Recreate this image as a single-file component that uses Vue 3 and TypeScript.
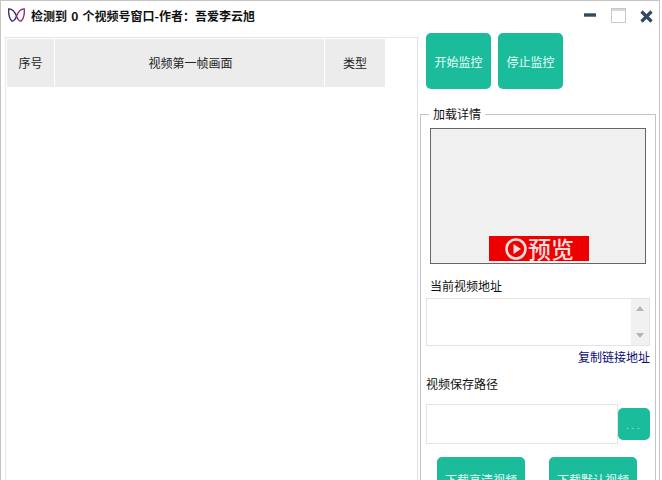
<script setup lang="ts">
const columns: { label: string; width: number }[] = [
  { label: '序号', width: 47 },
  { label: '视频第一帧画面', width: 269 },
  { label: '类型', width: 60 },
]
</script>

<template>
  <div class="window">
    <header class="titlebar">
      <svg class="logo" width="17" height="14" viewBox="0 0 17 14" fill="none">
        <path d="M8.5 8C7 4 4 1 .8 .8 .3 5 1.2 11 3.6 12.8 5.6 13.8 7.6 11 8.5 8Z" stroke="#3a1f78" stroke-width="1.3" />
        <path d="M8.5 8C10 4 13 1 16.2 .8 16.7 5 15.8 11 13.4 12.8 11.4 13.8 9.4 11 8.5 8Z" stroke="#8a2468" stroke-width="1.3" />
      </svg>
      <span class="title">检测到 0 个视频号窗口-作者：吾爱李云旭</span>
      <div class="controls">
        <svg width="12" height="4" viewBox="0 0 12 4"><rect width="12" height="3.4" y="0.3" fill="#34495e" /></svg>
        <svg width="15" height="15" viewBox="0 0 15 15" fill="none">
          <rect x="0.5" y="0.5" width="14" height="14" fill="#fff" stroke="#c8c8c8" />
          <rect x="1" y="1" width="13" height="2" fill="#d8d8d8" />
        </svg>
        <svg class="close" width="13" height="13" viewBox="0 0 13 13"><path d="M1.5 1.5L11.5 11.5M11.5 1.5L1.5 11.5" stroke="#34495e" stroke-width="3.2" /></svg>
      </div>
    </header>

    <div class="body">
      <section class="table-panel">
        <div class="table-head">
          <div v-for="c in columns" :key="c.label" class="th" :style="{ width: c.width + 'px' }">{{ c.label }}</div>
        </div>
      </section>

      <aside class="side">
        <div class="top-actions">
          <button class="btn top-btn">开始监控</button>
          <button class="btn top-btn">停止监控</button>
        </div>

        <fieldset class="group">
          <legend>加载详情</legend>
          <div class="preview">
            <div class="banner">
              <svg width="24" height="24" viewBox="0 0 24 24" fill="none">
                <circle cx="12" cy="12" r="9.5" stroke="#fbdcdc" stroke-width="2.6" />
                <path d="M9.5 7L17 12L9.5 17Z" fill="#fbdcdc" />
              </svg>
              <span>预览</span>
            </div>
          </div>

          <div class="label url-label">当前视频地址</div>
          <div class="textarea">
            <div class="scrollbar">
              <svg width="8" height="5" viewBox="0 0 8 5"><path d="M4 0L8 5H0Z" fill="#b4b4b4" /></svg>
              <svg width="8" height="5" viewBox="0 0 8 5"><path d="M0 0H8L4 5Z" fill="#b4b4b4" /></svg>
            </div>
          </div>
          <div class="copy-row"><a class="copy">复制链接地址</a></div>

          <div class="label path-label">视频保存路径</div>
          <div class="path-row">
            <div class="path-input"></div>
            <button class="btn browse">...</button>
          </div>

          <div class="downloads">
            <button class="btn dl">下载高清视频</button>
            <button class="btn dl">下载默认视频</button>
          </div>
        </fieldset>
      </aside>
    </div>
  </div>
</template>

<style>
html, body {
  margin: 0;
  height: 480px;
  overflow: hidden;
  background: #fff;
}
</style>

<style scoped>
.window {
  width: 660px;
  height: 520px;
  box-sizing: border-box;
  border: 1px solid #c4c4c4;
  background: #fff;
  font-family: "Noto Sans CJK SC", "Liberation Sans", sans-serif;
  font-size: 12px;
  color: #222;
}
.titlebar {
  display: flex;
  align-items: center;
  height: 28px;
  padding: 0 6px 0 7px;
}
.logo { margin-right: 6px; }
.title {
  font-weight: 700;
  font-size: 12px;
  word-spacing: 1.5px;
  color: #111;
}
.controls {
  margin-left: auto;
  display: flex;
  align-items: center;
  gap: 15px;
}
.close {
  margin: 2px 0 0 -1px;
}
.body {
  display: flex;
  align-items: flex-start;
}
.table-panel {
  width: 413px;
  height: 480px;
  margin-top: 8px;
  margin-left: 4px;
  box-sizing: border-box;
  border-top: 1px solid #e6e6e6;
  border-right: 1px solid #e0e0e0;
  border-left: 1px solid #e6e6e6;
  padding: 1px 0 0 1px;
  flex: none;
}
.table-head {
  display: flex;
  gap: 1px;
}
.th {
  height: 48px;
  display: flex;
  align-items: center;
  justify-content: center;
  padding-bottom: 2px;
  box-sizing: border-box;
  background: #ececec;
  font-size: 12px;
}
.th:nth-child(2) {
  padding-left: 2px;
}
.side {
  width: 240px;
  margin-left: 2px;
  flex: none;
}
.top-actions {
  display: flex;
  gap: 7px;
  margin: 4px 0 0 6px;
}
.btn {
  border: none;
  padding: 0;
  background: #1abc9c;
  color: #eafff9;
  border-radius: 5px;
  font-family: inherit;
  font-size: 12px;
}
.top-btn {
  width: 65px;
  height: 56px;
}
.group {
  margin: 17px 0 0 0;
  padding: 6px 0 0 0;
  width: 236px;
  box-sizing: border-box;
  border: 1px solid #c4c4c4;
  border-bottom: none;
  min-width: 0;
  height: 380px;
}
legend {
  margin-left: 8px;
  padding: 0 4px;
  font-size: 12px;
  line-height: 16px;
  color: #111;
}
.preview {
  margin-left: 9px;
  width: 216px;
  height: 136px;
  box-sizing: border-box;
  border: 1px solid #666;
  background: #f0f0f0;
  display: flex;
  justify-content: center;
  align-items: flex-end;
  padding: 0 0 2px 2px;
}
.banner {
  width: 100px;
  height: 25px;
  background: #ee0000;
  color: #fbdcdc;
  display: flex;
  align-items: center;
  justify-content: center;
  font-size: 23px;
  font-weight: 500;
  line-height: 25px;
}
.label {
  font-size: 12px;
  line-height: 16px;
  color: #111;
}
.url-label {
  margin: 14px 0 0 9px;
}
.textarea {
  margin: 4px 0 0 5px;
  width: 224px;
  height: 48px;
  box-sizing: border-box;
  border: 1px solid #e4e4e4;
  display: flex;
  justify-content: flex-end;
}
.scrollbar {
  width: 18px;
  background: #f1f1f1;
  display: flex;
  flex-direction: column;
  justify-content: space-between;
  align-items: center;
  padding: 7px 0;
  box-sizing: border-box;
}
.copy-row {
  width: 229px;
  text-align: right;
  margin-top: 3px;
  line-height: 16px;
}
.copy {
  color: #0b0b70;
  font-size: 12px;
}
.path-label {
  margin: 11px 0 0 5px;
}
.path-row {
  display: flex;
  align-items: center;
  margin: 12px 0 0 5px;
}
.path-input {
  width: 192px;
  height: 40px;
  box-sizing: border-box;
  border: 1px solid #e4e4e4;
}
.browse {
  width: 32px;
  height: 32px;
  font-size: 10px;
  letter-spacing: 2.5px;
  color: #a8e6d8;
}
.downloads {
  display: flex;
  gap: 24px;
  margin: 13px 0 0 16px;
}
.dl {
  width: 88px;
  height: 44px;
}
</style>
